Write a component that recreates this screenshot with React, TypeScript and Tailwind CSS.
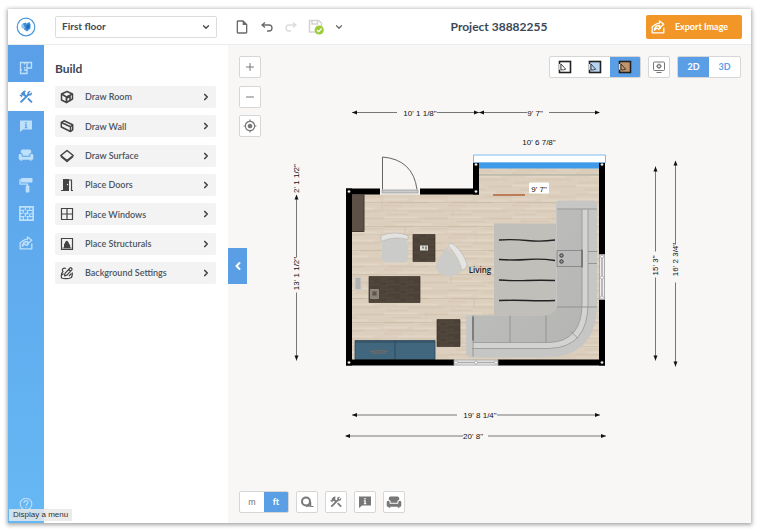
import type { ReactNode } from "react";
import {
  MdConstruction,
  MdOutlineInsertDriveFile,
  MdGpsFixed,
} from "react-icons/md";
import {
  ChevronDown,
  ChevronLeft,
  ChevronRight,
  Minus,
  Plus,
} from "lucide-react";

/* ---------- icons ---------- */

function FloorIcon() {
  return (
    <svg viewBox="0 0 14 14" className="size-3.5" fill="none" stroke="currentColor" strokeWidth="1.3">
      <path d="M1.500 1.500h11V7H8v5.500H1.500z" />
      <path d="M5.500 1.500v2M8 1.500V7M5.500 6v1.500M1.500 9h1.500M5 9h3" />
    </svg>
  );
}

function InfoBubbleIcon() {
  return (
    <svg viewBox="0 0 14 14" className="size-3.5" fill="currentColor" fillRule="evenodd">
      <path d="M1 1.500h12v9H4L1 13zM6.300 3v1.400h1.400V3zM5.800 5.200v1h.6v2h-.6v1h2.500v-1h-.6v-3z" />
    </svg>
  );
}

function ArmchairIcon() {
  return (
    <svg viewBox="0 0 16 14" className="h-3.5 w-4" fill="currentColor">
      <path d="M4.500 1.500h7q1.700 0 1.700 1.700v1.500q-1.900.2-1.900 2.300v.8H4.700V7q0-2.100-1.900-2.300V3.200q0-1.700 1.700-1.700z" />
      <path d="M2.200 5.700q1.500 0 1.500 1.500v1.600h8.600V7.200q0-1.500 1.500-1.500t1.500 1.500v3.300q0 1.200-1.200 1.200h-.6v1h-1.700v-1H4.200v1H2.500v-1h-.6q-1.200 0-1.200-1.200V7.200q0-1.500 1.500-1.500z" />
    </svg>
  );
}

function RollerIcon() {
  return (
    <svg viewBox="0 0 14 16" className="h-4 w-3.5" fill="currentColor">
      <rect x="2" y="1" width="11.500" height="4.500" rx="1" />
      <path d="M2.500 3H1v4.200h7.500V9" fill="none" stroke="currentColor" strokeWidth="1.300" />
      <rect x="6.700" y="8.500" width="3.700" height="7" rx="1" />
    </svg>
  );
}

function BrickIcon() {
  return (
    <svg viewBox="0 0 14 14" className="size-[15px]" fill="none" stroke="currentColor" strokeWidth="1.500">
      <path d="M.8.800h12.400v12.400H.800z" />
      <path d="M1 4h4M7 4h6M1 7h2M5 7h4M11 7h2M1 10h4M7 10h6M6 1v3M10 1v2M4 4v3M8 4v3M6 7v3M10 7v3M4 10v3M8 10v3" strokeWidth="1.200" />
    </svg>
  );
}

function ExportIcon() {
  return (
    <svg viewBox="0 0 14 14" className="size-3.5" fill="none" stroke="currentColor" strokeWidth="1.300" strokeLinejoin="round">
      <path d="M4.500 4.500 1.200 6.800v6h11.600V7.500" />
      <path d="M3.200 10.300Q4 5.500 8.500 5.500V7.800L12.800 4.300 8.500 1v2.200Q5.500 3.200 4 5" />
      <path d="M3.200 10.300 6 8l1.800 1.500L10 7.300" />
    </svg>
  );
}

function RoomIcon() {
  return (
    <svg viewBox="0 0 14 14" className="size-3.5" fill="none" stroke="currentColor" strokeWidth="1.500" strokeLinejoin="round">
      <path d="M1.500 4 7 1.500 12.500 4v5L10 10.500V6.500L6.500 8v4.500L1.500 10z" />
      <path d="M1.500 4l5 3 6-3M6.500 7v5.500l3.500-2" />
    </svg>
  );
}

function WallIcon() {
  return (
    <svg viewBox="0 0 14 14" className="size-3.5" fill="none" stroke="currentColor" strokeWidth="1.500" strokeLinejoin="round">
      <path d="M1.300 3.500 4 1.800l8.700 4v5L10.500 12.500 1.300 8z" />
      <path d="M1.300 3.500l9.200 4.300v4.700M10.500 7.800l2.200-2" />
    </svg>
  );
}

function SurfaceIcon() {
  return (
    <svg viewBox="0 0 14 14" className="size-3.5" fill="none" stroke="currentColor" strokeWidth="1.500" strokeLinejoin="round">
      <path d="M.8 6.500 7 1.500l6.200 5L7 11.500z" />
      <path d="M1 7.500l6 5 6-5" />
    </svg>
  );
}

function DoorIcon() {
  return (
    <svg viewBox="0 0 14 14" className="size-3.5">
      <path d="M3 1h6v11H3z" fill="currentColor" />
      <circle cx="7.500" cy="6.500" r=".7" fill="#f3f3f3" />
      <path d="M1 12.500h8M9 2h2.500v10.500H13" fill="none" stroke="currentColor" strokeWidth="1.200" />
    </svg>
  );
}

function WindowIcon() {
  return (
    <svg viewBox="0 0 14 14" className="size-3.5" fill="none" stroke="currentColor" strokeWidth="1.200">
      <path d="M1.500 1.500h11v11h-11zM7 1.500v11M1.500 7h11" />
    </svg>
  );
}

function StructuralIcon() {
  return (
    <svg viewBox="0 0 14 14" className="size-3.5">
      <path d="M1.500 1.500h11v11h-11z" fill="none" stroke="currentColor" strokeWidth="1.200" />
      <path d="M4 11V7l1-.8V5l2-1.500L9 6v1l1.200 1v3z" fill="currentColor" />
      <path d="M2.500 11h9" stroke="currentColor" />
    </svg>
  );
}

function BackgroundIcon() {
  return (
    <svg viewBox="0 0 14 14" className="size-3.5" fill="none" stroke="currentColor" strokeWidth="1.200" strokeLinejoin="round">
      <path d="M6 2.500C3 1.500 1.500 3.500 3 5.500 1 7 1 9 1.500 12c3 1 7 .8 10-.5.800-2 1-3.500.8-5" />
      <path d="M4.500 9.800 5 7.300l5-5.300c1-.8 2.700.5 1.900 1.700L7 9.200zM8.700 3.500l1.800 1.600M2 9l1.500-1.500M9 10l2.500-2.500" />
    </svg>
  );
}

function UndoIcon({ flipped = false }: { flipped?: boolean }) {
  return (
    <svg viewBox="0 0 14 14" className={flipped ? "size-3.5 -scale-x-100" : "size-3.5"} fill="none" stroke="currentColor" strokeWidth="1.300">
      <path d="M5 2.500 2 5l3 2.500M2.300 5H9a3 3 0 0 1 0 6H7" />
    </svg>
  );
}

function SavedIcon() {
  return (
    <svg viewBox="0 0 16 16" className="size-4">
      <path d="M1.500 1.500h9l3 2.500v9h-12zM4 1.500v3.500h5.500V1.500" fill="none" stroke="#d3d3d3" strokeWidth="1.500" />
      <circle cx="11.200" cy="11" r="4.600" fill="#9ccb3c" />
      <path d="M9 11l1.700 1.700L13.600 9.500" fill="none" stroke="#fff" strokeWidth="1.200" />
    </svg>
  );
}

function LogoMark() {
  return (
    <svg viewBox="0 0 20 20" className="size-5">
      <circle cx="10" cy="10" r="8.800" fill="#fff" stroke="#4a98dc" strokeWidth="1.200" />
      <path d="M5.500 7 9 6v6l-3.500-1z" fill="#8cc4f0" />
      <path d="M7 6.500l2.500-1 1 1 3-1.500 1 2.500v4L11 14.500 7.500 12l1.500-1z" fill="#3f8ed6" />
      <path d="M10.500 8.500l3-1.500v3.500l-3 2z" fill="#1f68b4" />
    </svg>
  );
}

function TapeIcon() {
  return (
    <svg viewBox="0 0 14 14" className="size-3.5" fill="none" stroke="currentColor">
      <circle cx="6" cy="6.500" r="4" strokeWidth="2" />
      <path d="M6 11H10.500V7" strokeWidth="1.500" />
      <path d="M11 11.500h2.500" strokeWidth="1" />
    </svg>
  );
}

function DisplayIcon() {
  return (
    <svg viewBox="0 0 14 14" className="size-3.5" fill="none" stroke="currentColor" strokeWidth="1">
      <rect x="1.500" y="2" width="11" height="8.500" rx="1" />
      <circle cx="7" cy="6.200" r="1.600" strokeWidth="1.300" />
      <path d="M7 3.500v1.200M7 7.700v1.200M4.300 6.200h1.200M8.500 6.200h1.200M4.500 12.500h5" strokeWidth="1" />
    </svg>
  );
}

function ViewIcon({ fill }: { fill: string }) {
  return (
    <svg viewBox="0 0 14 14" className="size-3.5" stroke="#222">
      <rect x="1.500" y="1.500" width="11" height="11" fill={fill} strokeWidth="1.600" />
      <path d="M3 4l4.700 5.200Q5.500 10.300 3 9.800z" fill="none" strokeWidth=".8" />
      <path d="M1.500 4v5.800" stroke="#ddd" strokeWidth="1.200" />
    </svg>
  );
}

function HelpIcon() {
  return (
    <svg viewBox="0 0 14 14" className="size-3.5" fill="none" stroke="currentColor" strokeWidth="1.100">
      <circle cx="7" cy="7" r="5.800" />
      <path d="M5 5.700C5 3 9 3 9 5.500 9 7 7 7 7 8.700M7 9.700v1.200" />
    </svg>
  );
}

/* ---------- data ---------- */

const sections: { label: string; icon: ReactNode }[] = [
  { label: "Build", icon: <MdConstruction className="size-4" /> },
  { label: "Info", icon: <InfoBubbleIcon /> },
  { label: "Furniture", icon: <ArmchairIcon /> },
  { label: "Decorate", icon: <RollerIcon /> },
  { label: "Materials", icon: <BrickIcon /> },
  { label: "Export", icon: <ExportIcon /> },
];

const buildTools: { label: string; icon: ReactNode }[] = [
  { label: "Draw Room", icon: <RoomIcon /> },
  { label: "Draw Wall", icon: <WallIcon /> },
  { label: "Draw Surface", icon: <SurfaceIcon /> },
  { label: "Place Doors", icon: <DoorIcon /> },
  { label: "Place Windows", icon: <WindowIcon /> },
  { label: "Place Structurals", icon: <StructuralIcon /> },
  { label: "Background Settings", icon: <BackgroundIcon /> },
];

/* ---------- floor plan ---------- */

function Arrow({ x, y, dir }: { x: number; y: number; dir: "l" | "r" | "u" | "d" }) {
  const points = {
    l: `${x},${y} ${x + 5},${y - 2} ${x + 5},${y + 2}`,
    r: `${x},${y} ${x - 5},${y - 2} ${x - 5},${y + 2}`,
    u: `${x},${y} ${x - 2},${y + 5} ${x + 2},${y + 5}`,
    d: `${x},${y} ${x - 2},${y - 5} ${x + 2},${y - 5}`,
  };
  return <polygon points={points[dir]} fill="#111" />;
}

function VerticalLabel({ x, y, children }: { x: number; y: number; children: string }) {
  return (
    <text x={x} y={y} transform={`rotate(-90 ${x} ${y})`} dominantBaseline="central">
      {children}
    </text>
  );
}

const planks = [203, 211, 219, 227, 235, 243, 251, 259, 267, 275, 283, 291, 299, 307, 315, 323, 331, 339, 347, 355];
const corners = [
  [349, 192],
  [476, 192],
  [476, 165],
  [602, 165],
  [349, 363],
  [602, 363],
];

function FloorPlan() {
  return (
    <svg
      viewBox="228 46 523 477"
      className="col-start-1 row-start-1 h-full min-h-0 w-full"
      role="img"
      aria-label="First floor plan"
    >
      <defs>
        <pattern id="wood" width="64" height="32" patternUnits="userSpaceOnUse">
          <rect width="64" height="32" fill="#dccfbd" />
          <path d="M0 3h30M36 5h28M5 11h40M0 14h18M24 20h36M2 23h22M40 27h24M8 30h30" stroke="#d0c1ab" strokeWidth=".8" />
          <path d="M12 1h36M0 8h24M30 9h30M14 17h40M0 26h34" stroke="#e6dccd" strokeWidth="1.200" />
        </pattern>
        <pattern id="walnut" width="20" height="8" patternUnits="userSpaceOnUse">
          <rect width="20" height="8" fill="#4c4136" />
          <path d="M0 2h14M6 5h14M0 7h8" stroke="#5a4f42" strokeWidth=".8" />
        </pattern>
        <linearGradient id="seat" x1="0" y1="0" x2="1" y2="1">
          <stop offset="0" stopColor="#c0c0be" />
          <stop offset="1" stopColor="#b5b5b3" />
        </linearGradient>
      </defs>

      {/* floor */}
      <path d="M350 193H477V166H601V362H350z" fill="url(#wood)" />
      {planks.map((y, i) => (
        <path
          key={y}
          d={`M352 ${y}H599M${382 + ((i * 71) % 190)} ${y}v8`}
          stroke="#bdad98"
          strokeWidth=".5"
          opacity={i % 3 === 0 ? 0.7 : 0.3}
        />
      ))}
      <path d="M479 175.500H599" stroke="#a9ada0" />

      {/* rug */}
      <path d="M494 224H559V316H494z" fill="#c1bfba" />
      <path
        d="M499 240.500q14-1 28 .5t28-.5M499 260q14 1 28 0t28 1M499 280.500q14 1 28 .5t28 0M499 301q14-.5 28 0t28 0"
        fill="none"
        stroke="#222"
        strokeWidth="1.300"
      />

      {/* sectional sofa */}
      <path d="M556 203q0-2 4-2h32q5 0 5 3V304q0 54-52 54H470q-4 0-4-5V316H541q15 0 15-13z" fill="#c6c6c4" />
      <path d="M557 210H582V304q0 38-33 39H473V316H541q16 0 16-13z" fill="url(#seat)" />
      <path d="M582 210H588V304q0 44-39 45H472V343H549q33-1 33-39z" fill="#d3d3d1" />
      <path d="M588 210V304q0 44-39 45H472M582 210V304q0 38-33 39H473" fill="none" stroke="#959595" strokeWidth=".8" />
      <path d="M557 209.500H597M473 316V357M510 316V343M546 316V343M557 307.500H597M571 332l7 7M588 252h9M588 264h9" stroke="#8a8a8a" strokeWidth=".8" fill="none" />
      <path d="M557 251H582V267H557z" fill="#bababa" stroke="#777" strokeWidth=".7" />
      <path d="M582 250V268M473 317V341" stroke="#666" strokeWidth="1.300" />
      <g fill="#999" stroke="#333">
        <circle cx="561.500" cy="256" r="1.700" />
        <circle cx="561.500" cy="262" r="1.700" />
      </g>

      {/* chairs */}
      <path d="M382 240q12-3 25 0l1 18q0 5-6 5H387q-5 0-5-5z" fill="#cbcbc9" />
      <path d="M381 236q14-5 27 0v4q-13-4-27 2z" fill="#e2e2e0" stroke="#aaa" strokeWidth=".5" />
      <path d="M447 248Q457 257 462 270q-5 7-14 7-8-1-12-8-1-7 11-21z" fill="#cbcbc9" />
      <path d="M448 246q3-4 7 0 9 8 12 19 0 4-5 6-4-15-14-25z" fill="#e4e4e2" stroke="#aaa" strokeWidth=".5" />

      {/* tables and cabinets */}
      <path d="M352 195H364V232H352z" fill="#5d5147" />
      <path d="M364 195V232H352" fill="none" stroke="#40362d" />
      <g fill="url(#walnut)" stroke="#3b322a" strokeWidth=".7">
        <path d="M413 235H435V262H413z" />
        <path d="M369 277H420V303H369z" />
        <path d="M437 320H460V347H437z" />
      </g>
      <path d="M420 246h8v5h-8z" fill="#e2dfd9" />
      <path d="M422 247h2v2h-2zM425 247h2v3h-2z" fill="#888" />
      <path d="M370.500 290h8v9h-8z" fill="#8a8177" stroke="#a39a8f" strokeWidth=".7" />
      <path d="M372.500 292h4v4h-4z" fill="#5d544b" />
      <path d="M355 278h6v12h-6z" fill="#b3b2ae" stroke="#ccc" />
      <path d="M355 341H435V360H355z" fill="#41677f" stroke="#2c485b" strokeWidth=".8" />
      <path d="M395 341V360M355 342.500H435" stroke="#2c485b" />
      <path d="M370 352q10-2 18 0M372 353.500h14" fill="none" stroke="#7b6a5f" />

      {/* walls */}
      <path
        d="M380 192H349V363H454M420 192H476V163M602 163V255M602 300V363H498"
        fill="none"
        stroke="#000"
        strokeWidth="6"
      />
      <path d="M346 189h6v6h-6zM346 360h6v6h-6zM599 360h6v6h-6zM473 189h6v6h-6z" />
      <path d="M479 163H599V169H479z" fill="#3f9be8" />
      <path d="M473.500 155.500H605.500V163H473.500z" fill="#fff" stroke="#7cbcf0" />

      {/* windows */}
      <path d="M454 360.500H498V365.500H454zM599.500 255H604.500V300H599.500z" fill="#eee" stroke="#999" strokeWidth=".8" />
      <path d="M454 363H498M602 255V300" stroke="#aaa" strokeWidth="1.500" />
      <g fill="#fff" stroke="#999" strokeWidth=".7">
        <circle cx="456" cy="363" r="1.500" />
        <circle cx="476" cy="363" r="1.500" />
        <circle cx="496" cy="363" r="1.500" />
        <circle cx="602" cy="257" r="1.500" />
        <circle cx="602" cy="278" r="1.500" />
        <circle cx="602" cy="298" r="1.500" />
      </g>

      {/* door */}
      <path d="M380 189H420V195H380z" fill="#f5f5f5" />
      <path d="M382 190.500H418V193.500H382z" fill="#ccc" stroke="#888" strokeWidth=".6" />
      <path d="M382.500 190V157.500Q413 160 417 190" fill="none" stroke="#555" strokeWidth=".9" />

      {corners.map(([cx, cy]) => (
        <circle key={`${cx}-${cy}`} cx={cx} cy={cy} r="1.300" fill="#fff" stroke="#777" strokeWidth=".5" />
      ))}

      {/* dimension lines */}
      <path
        d="M352 113H397M437 113H527M549 113H599M352 415.500H457M497 415.500H600M346 436.500H463M488 436.500H606"
        stroke="#555"
        strokeWidth=".8"
      />
      <path
        d="M296.500 196V258M296.500 293V361M655.500 167V252M655.500 278V361M675.500 162V245M675.500 283V367"
        stroke="#555"
        strokeWidth=".8"
      />
      <Arrow x={352} y={113} dir="l" />
      <Arrow x={479} y={113} dir="r" />
      <Arrow x={479} y={113} dir="l" />
      <Arrow x={600} y={113} dir="r" />
      <Arrow x={352} y={415.5} dir="l" />
      <Arrow x={600} y={415.5} dir="r" />
      <Arrow x={345} y={436.5} dir="l" />
      <Arrow x={606} y={436.5} dir="r" />
      <Arrow x={296.5} y={195} dir="u" />
      <Arrow x={296.5} y={361} dir="d" />
      <Arrow x={655.5} y={167} dir="u" />
      <Arrow x={655.5} y={361} dir="d" />
      <Arrow x={675.5} y={161} dir="u" />
      <Arrow x={675.5} y={367} dir="d" />

      <path d="M493 195.500H525" stroke="#b0623a" strokeWidth="1.500" />
      <rect x="529" y="183" width="20" height="11" rx="1" fill="#fff" />

      <g
        fill="#111"
        textAnchor="middle"
        className="font-['Liberation_Sans',Arial,sans-serif] text-[8px]"
      >
        <text x="420" y="116">10' 1 1/8"</text>
        <text x="535" y="116">9' 7"</text>
        <text x="539" y="145">10' 6 7/8"</text>
        <text x="539" y="192">9' 7"</text>
        <text x="480" y="418">19' 8 1/4"</text>
        <text x="473" y="439">20' 8"</text>
        <VerticalLabel x={296} y={179}>2' 1 1/2"</VerticalLabel>
        <VerticalLabel x={296} y={274}>13' 1 1/2"</VerticalLabel>
        <VerticalLabel x={655} y={266}>15' 3"</VerticalLabel>
        <VerticalLabel x={675} y={260}>16' 2 3/4"</VerticalLabel>
      </g>
      <text x="480" y="273" textAnchor="middle" className="font-['Open_Sans',sans-serif] text-[8px] font-semibold" fill="#222">
        Living
      </text>
    </svg>
  );
}

/* ---------- controls ---------- */

function ToolButton({ label, children }: { label: string; children: ReactNode }) {
  return (
    <button
      type="button"
      aria-label={label}
      className="flex size-[22px] items-center justify-center rounded-xs border border-[#d6d6d6] bg-white text-[#777]"
    >
      {children}
    </button>
  );
}

function CanvasControls() {
  return (
    <div className="z-10 col-start-1 row-start-1 flex flex-col justify-between pt-[11px] pb-2.5">
      <div className="flex items-start justify-between pr-2.5 pl-[11px]">
        <div className="flex h-[81px] flex-col justify-between">
          <ToolButton label="Zoom in"><Plus className="size-3" strokeWidth={2} /></ToolButton>
          <ToolButton label="Zoom out"><Minus className="size-3" strokeWidth={2} /></ToolButton>
          <ToolButton label="Center plan"><MdGpsFixed className="size-3.5" /></ToolButton>
        </div>
        <div className="flex gap-[7px]">
          <div className="flex h-[22px] overflow-hidden rounded-xs border border-[#d6d6d6] bg-white">
            <button type="button" aria-label="Outline view" className="flex w-[30px] items-center justify-center">
              <ViewIcon fill="#fff" />
            </button>
            <button type="button" aria-label="Tinted view" className="flex w-[30px] items-center justify-center">
              <ViewIcon fill="#b9d3f2" />
            </button>
            <button type="button" aria-label="Textured view" className="flex w-[30px] items-center justify-center bg-[#5a9fe6]">
              <ViewIcon fill="#c0956b" />
            </button>
          </div>
          <ToolButton label="Display settings"><DisplayIcon /></ToolButton>
          <div className="flex h-[22px] overflow-hidden rounded-xs border border-[#d6d6d6] bg-white text-[9px] font-bold">
            <button type="button" className="w-[31px] bg-[#5a9fe6] text-white">2D</button>
            <button type="button" className="w-[31px] text-[#5a9fe6]">3D</button>
          </div>
        </div>
      </div>

      <div className="flex gap-[7px] pl-[11px]">
        <div className="flex h-[22px] overflow-hidden rounded-xs border border-[#d6d6d6] bg-white text-[9px]">
          <button type="button" className="w-6 text-[#777]">m</button>
          <button type="button" className="w-6 bg-[#5a9fe6] font-bold text-white">ft</button>
        </div>
        <ToolButton label="Measurements"><TapeIcon /></ToolButton>
        <ToolButton label="Structure"><MdConstruction className="size-3.5" /></ToolButton>
        <ToolButton label="Labels"><InfoBubbleIcon /></ToolButton>
        <ToolButton label="Furniture"><ArmchairIcon /></ToolButton>
      </div>
    </div>
  );
}

function Header() {
  return (
    <header className="z-20 flex h-9 shrink-0 items-center border-b border-[#ececec] bg-white pr-[9px]">
      <a href="#home" aria-label="Home" className="flex w-9 justify-center">
        <LogoMark />
      </a>
      <div className="relative ml-[11px] flex w-[162px] items-center">
        <select
          aria-label="Floor"
          defaultValue="first"
          className="h-[22px] w-full appearance-none rounded-xs border border-[#dcdcdc] bg-white px-1.5 text-[10px] font-bold text-[#3c4856]"
        >
          <option value="first">First floor</option>
        </select>
        <ChevronDown className="pointer-events-none absolute right-1.5 size-2.5 text-[#444]" strokeWidth={3} />
      </div>
      <div className="ml-[17px] flex items-center gap-2.5 text-[#6b6b6b]">
        <button type="button" aria-label="New project"><MdOutlineInsertDriveFile className="size-4" /></button>
        <button type="button" aria-label="Undo"><UndoIcon /></button>
        <button type="button" aria-label="Redo" className="text-[#dcdcdc]"><UndoIcon flipped /></button>
        <button type="button" aria-label="Saved"><SavedIcon /></button>
        <button type="button" aria-label="Save options"><ChevronDown className="size-2.5" strokeWidth={3} /></button>
      </div>
      <h1 className="flex-1 pl-2 text-center text-xs font-bold text-[#3c4856]">Project 38882255</h1>
      <button
        type="button"
        className="flex h-6 w-24 items-center rounded-xs bg-[#f29727] pl-[5px] text-[9px] font-bold text-white"
      >
        <ExportIcon />
        <span className="flex-1 pr-1 text-center whitespace-nowrap">Export Image</span>
      </button>
    </header>
  );
}

export default function App() {
  return (
    <div className="flex h-screen bg-white pt-[9px] pr-[9px] pb-2 pl-2 font-[Lato,'Open_Sans',sans-serif]">
      <div className="flex flex-1 flex-col bg-white shadow-[0_1px_4px_1px_rgba(0,0,0,0.35)]">
        <Header />
        <div className="flex min-h-0 flex-1">
          <nav
            aria-label="Sections"
            className="relative flex w-9 shrink-0 flex-col bg-linear-to-b from-[#5a9fe8] to-[#66b8f4] text-[#bfe0fa]"
          >
            <button type="button" aria-label="Floors" className="flex h-[37px] items-center justify-center pt-2">
              <FloorIcon />
            </button>
            <div className="grid h-44 grid-rows-6">
              {sections.map((s, i) => (
                <button
                  key={s.label}
                  type="button"
                  aria-label={s.label}
                  className={
                    i === 0
                      ? "flex items-center justify-center bg-white text-[#4a8fd8]"
                      : "flex items-center justify-center"
                  }
                >
                  {s.icon}
                </button>
              ))}
            </div>
            <button type="button" aria-label="Help" className="mt-auto mb-3 flex justify-center">
              <HelpIcon />
            </button>
            <span
              role="tooltip"
              className="absolute bottom-0.5 left-px z-20 bg-[#e6e8e6]/85 px-1 font-['Liberation_Sans',Arial,sans-serif] text-[8px] leading-3 whitespace-nowrap text-[#333]"
            >
              Display a menu
            </span>
          </nav>

          <aside className="w-[184px] shrink-0 pt-4 pr-3 pl-[11px]">
            <h2 className="text-xs leading-4 font-bold text-[#3c4856]">Build</h2>
            <ul className="mt-[9px] flex h-[198px] flex-col justify-between">
              {buildTools.map((tool) => (
                <li key={tool.label}>
                  <button
                    type="button"
                    className="flex h-[22px] w-full items-center rounded-xs bg-[#f3f3f3] px-[5px] text-[#444]"
                  >
                    {tool.icon}
                    <span className="ml-[11px] flex-1 text-left text-[9px] font-semibold text-[#4c5560]">{tool.label}</span>
                    <ChevronRight className="size-2.5" strokeWidth={4} />
                  </button>
                </li>
              ))}
            </ul>
          </aside>

          <main className="relative grid min-w-0 flex-1 grid-rows-[minmax(0,1fr)] bg-[#f8f7f6]">
            <FloorPlan />
            <CanvasControls />
            <button
              type="button"
              aria-label="Collapse panel"
              className="absolute top-[203px] left-0 z-20 flex h-9 w-[19px] items-center justify-center bg-[#5a9fe6] text-white"
            >
              <ChevronLeft className="size-3" strokeWidth={4} />
            </button>
          </main>
        </div>
      </div>
    </div>
  );
}
